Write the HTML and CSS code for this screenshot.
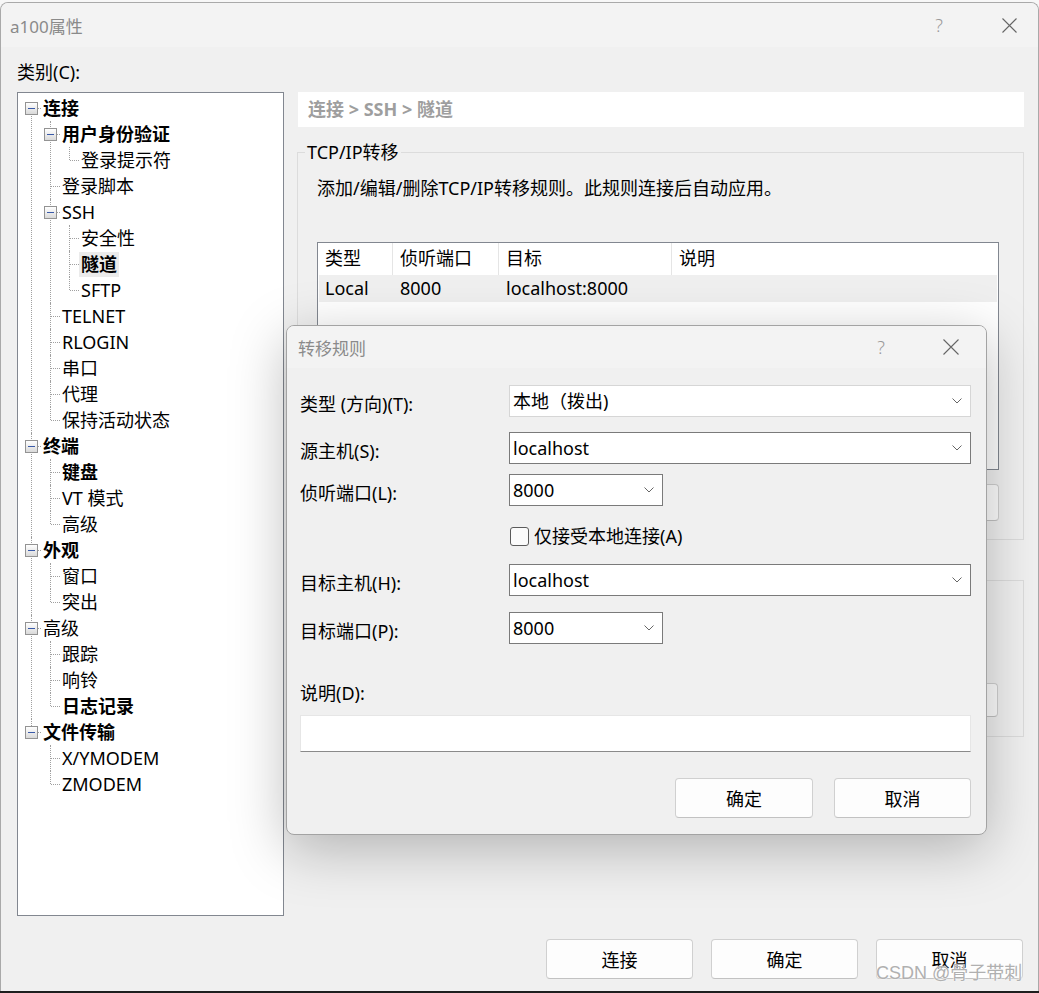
FILE: index.html
```html
<!DOCTYPE html>
<html lang="zh-CN">
<head>
<meta charset="utf-8">
<title>a100属性</title>
<link rel="stylesheet" href="styles.css">
</head>
<body>
<div class="window">
  <div class="titlebar">
    <span class="title">a100属性</span>
    <span class="tb-btns">
      <span class="tb-slot tb-help">?</span>
      <span class="tb-slot"><svg class="xicon" width="15" height="15" viewBox="0 0 15 15"><path d="M0.5 0.5 L14.5 14.5 M14.5 0.5 L0.5 14.5" stroke="#666" stroke-width="1.1" fill="none"/></svg></span>
    </span>
  </div>
  <div class="body">
    <div class="main">
      <div class="left">
        <div class="cat-label">类别(C):</div>
        <div class="tree">
          <ul class="tl t0">
            <li><div class="row"><span class="tg"></span><span class="lb b">连接</span></div>
              <ul class="tl">
                <li><div class="row"><span class="tg"></span><span class="lb b">用户身份验证</span></div>
                  <ul class="tl">
                    <li><div class="row"><span class="lb">登录提示符</span></div></li>
                  </ul>
                </li>
                <li><div class="row"><span class="lb">登录脚本</span></div></li>
                <li><div class="row"><span class="tg"></span><span class="lb">SSH</span></div>
                  <ul class="tl">
                    <li><div class="row"><span class="lb">安全性</span></div></li>
                    <li><div class="row"><span class="lb b sel">隧道</span></div></li>
                    <li><div class="row"><span class="lb">SFTP</span></div></li>
                  </ul>
                </li>
                <li><div class="row"><span class="lb">TELNET</span></div></li>
                <li><div class="row"><span class="lb">RLOGIN</span></div></li>
                <li><div class="row"><span class="lb">串口</span></div></li>
                <li><div class="row"><span class="lb">代理</span></div></li>
                <li><div class="row"><span class="lb">保持活动状态</span></div></li>
              </ul>
            </li>
            <li><div class="row"><span class="tg"></span><span class="lb b">终端</span></div>
              <ul class="tl">
                <li><div class="row"><span class="lb b">键盘</span></div></li>
                <li><div class="row"><span class="lb">VT 模式</span></div></li>
                <li><div class="row"><span class="lb">高级</span></div></li>
              </ul>
            </li>
            <li><div class="row"><span class="tg"></span><span class="lb b">外观</span></div>
              <ul class="tl">
                <li><div class="row"><span class="lb">窗口</span></div></li>
                <li><div class="row"><span class="lb">突出</span></div></li>
              </ul>
            </li>
            <li><div class="row"><span class="tg"></span><span class="lb">高级</span></div>
              <ul class="tl">
                <li><div class="row"><span class="lb">跟踪</span></div></li>
                <li><div class="row"><span class="lb">响铃</span></div></li>
                <li><div class="row"><span class="lb b">日志记录</span></div></li>
              </ul>
            </li>
            <li><div class="row"><span class="tg"></span><span class="lb b">文件传输</span></div>
              <ul class="tl">
                <li><div class="row"><span class="lb">X/YMODEM</span></div></li>
                <li><div class="row"><span class="lb">ZMODEM</span></div></li>
              </ul>
            </li>
          </ul>
        </div>
      </div>
      <div class="right">
        <div class="crumb">连接 &gt; SSH &gt; 隧道</div>
        <fieldset class="group g1">
          <legend>TCP/IP转移</legend>
          <p class="desc">添加/编辑/删除TCP/IP转移规则。此规则连接后自动应用。</p>
          <div class="list">
            <div class="lhead">
              <span class="c c1">类型</span><span class="c c2">侦听端口</span><span class="c c3">目标</span><span class="c c4">说明</span>
            </div>
            <div class="lrow">
              <span class="c c1">Local</span><span class="c c2">8000</span><span class="c c3">localhost:8000</span><span class="c c4"></span>
            </div>
          </div>
          <div class="gbtns">
            <button class="btn gbtn" aria-label="添加"></button>
            <button class="btn gbtn" aria-label="编辑"></button>
            <button class="btn gbtn" aria-label="删除"></button>
          </div>
        </fieldset>
        <div class="group g2">
          <div class="gbtns g2btns">
            <button class="btn gbtn" aria-label="浏览"></button>
          </div>
        </div>
      </div>
    </div>
    <div class="footer">
      <button class="btn fbtn">连接</button>
      <button class="btn fbtn">确定</button>
      <button class="btn fbtn">取消</button>
    </div>
  </div>
</div>
<div class="taskbar"></div>

<div class="dialog">
  <div class="dlg-title">
    <span class="dlg-name">转移规则</span>
    <span class="tb-btns dlg-btns">
      <span class="tb-slot tb-help">?</span>
      <span class="tb-slot"><svg class="xicon" width="16" height="16" viewBox="0 0 16 16"><path d="M0.5 0.5 L15.5 15.5 M15.5 0.5 L0.5 15.5" stroke="#666" stroke-width="1.1" fill="none"/></svg></span>
    </span>
  </div>
  <div class="dlg-body">
    <div class="frow r1">
      <span class="flabel">类型 (方向)(T):</span>
      <span class="combo wide light"><span class="cval">本地（拨出)</span><svg class="chev" width="10" height="6" viewBox="0 0 10 6"><path d="M0.5 0.5 L5 5 L9.5 0.5" stroke="#666" fill="none"/></svg></span>
    </div>
    <div class="frow r2">
      <span class="flabel">源主机(S):</span>
      <span class="combo wide"><span class="cval">localhost</span><svg class="chev" width="10" height="6" viewBox="0 0 10 6"><path d="M0.5 0.5 L5 5 L9.5 0.5" stroke="#666" fill="none"/></svg></span>
    </div>
    <div class="frow r3">
      <span class="flabel">侦听端口(L):</span>
      <span class="combo short"><span class="cval">8000</span><svg class="chev" width="10" height="6" viewBox="0 0 10 6"><path d="M0.5 0.5 L5 5 L9.5 0.5" stroke="#666" fill="none"/></svg></span>
    </div>
    <div class="crow">
      <span class="cbox"></span><span class="clabel">仅接受本地连接(A)</span>
    </div>
    <div class="frow r4">
      <span class="flabel">目标主机(H):</span>
      <span class="combo wide"><span class="cval">localhost</span><svg class="chev" width="10" height="6" viewBox="0 0 10 6"><path d="M0.5 0.5 L5 5 L9.5 0.5" stroke="#666" fill="none"/></svg></span>
    </div>
    <div class="frow r5">
      <span class="flabel">目标端口(P):</span>
      <span class="combo short"><span class="cval">8000</span><svg class="chev" width="10" height="6" viewBox="0 0 10 6"><path d="M0.5 0.5 L5 5 L9.5 0.5" stroke="#666" fill="none"/></svg></span>
    </div>
    <div class="dlabel">说明(D):</div>
    <div class="textbox"></div>
    <div class="dlg-actions">
      <button class="btn dbtn ok">确定</button>
      <button class="btn dbtn cancel">取消</button>
    </div>
  </div>
</div>

<div class="watermark">CSDN @骨子带刺</div>
</body>
</html>
```

FILE: styles.css
```css
* { box-sizing: border-box; }
html, body { margin: 0; padding: 0; }
body {
  width: 1039px;
  height: 993px;
  overflow: hidden;
  position: relative;
  background: #f7f7f7;
  font-family: "Noto Sans", "Noto Sans CJK SC", sans-serif;
  font-size: 18px;
  color: #000;
}

/* main window */
.window {
  margin-top: 2px;
  height: 989px;
  border: 1px solid #a9a9a9;
  border-bottom: 0;
  border-radius: 8px 8px 0 0;
  background: #f0f0f0;
  display: flex;
  flex-direction: column;
  overflow: hidden;
}
.titlebar {
  height: 44px;
  flex: none;
  background: #f3f3f3;
  display: flex;
  align-items: center;
  justify-content: space-between;
  padding-left: 9px;
}
.title { font-size: 17px; color: #8a8a8a; }
.tb-btns { display: flex; gap: 24px; margin-right: 6px; align-items: center; }
.tb-slot { width: 46px; display: flex; justify-content: center; align-items: center; }
.tb-help { color: #9a9a9a; font-size: 18px; font-weight: 300; }
.xicon { display: block; }

.body {
  flex: 1;
  display: flex;
  flex-direction: column;
  padding: 0 14px 0 16px;
}
.main { display: flex; gap: 14px; }
.left { width: 267px; flex: none; }
.cat-label { height: 45px; padding-top: 13px; line-height: 24px; }

/* tree */
.tree {
  height: 824px;
  border: 1px solid #828790;
  background: #fff;
  padding-top: 2px;
}
.tl { list-style: none; margin: 0; padding: 0; }
.tl .tl { margin-left: 19px; }
.tl li { position: relative; }
.tl li::before {
  content: "";
  position: absolute;
  left: 13px;
  top: 0;
  bottom: 0;
  border-left: 1px dotted #a0a0a0;
}
.tl li:last-child::before { bottom: auto; height: 13px; }
.t0 > li:first-child::before { top: 13px; }
.row {
  position: relative;
  height: 26px;
  display: flex;
  align-items: center;
  padding-left: 25px;
}
.row::before {
  content: "";
  position: absolute;
  left: 14px;
  top: 13px;
  width: 9px;
  border-top: 1px dotted #a0a0a0;
}
.tg {
  position: absolute;
  left: 7px;
  top: 7px;
  width: 13px;
  height: 13px;
  border: 1px solid #939393;
  background: linear-gradient(#ffffff, #d9d9d9);
  z-index: 1;
}
.tg::after {
  content: "";
  position: absolute;
  left: 2px;
  right: 2px;
  top: 5px;
  height: 1px;
  background: #3a5aa8;
}
.lb { line-height: 25px; white-space: nowrap; }
.lb.b { font-weight: bold; }
.lb.sel { background: #ebebeb; padding: 0 2px; margin-left: -2px; }

/* right panel */
.right { width: 726px; flex: none; padding-top: 45px; }
.crumb {
  height: 35px;
  line-height: 35px;
  background: #fff;
  padding-left: 10px;
  font-weight: bold;
  color: #9e9e9e;
}
.group {
  margin: 13px 0 0 -1px;
  width: 727px;
  min-width: 0;
  border: 1px solid #dcdcdc;
  padding: 12px 24px 18px 19px;
}
.group legend {
  padding: 0 2px;
  margin-left: -12px;
  line-height: 24px;
}
.desc { margin: 0; line-height: 24px; }
.list {
  margin-top: 42px;
  height: 228px;
  border: 1px solid #828790;
  background: #fff;
  padding: 0 1px;
}
.lhead, .lrow { display: flex; }
.lhead { height: 32px; line-height: 31px; }
.lrow { height: 27px; line-height: 27px; background: #efefef; }
.c { white-space: nowrap; padding-left: 7px; border-left: 1px solid transparent; }
.c1 { width: 73px; padding-left: 6px; border-left: 0; }
.c2 { width: 106px; }
.c3 { width: 173px; }
.c4 { flex: 1; }
.lhead .c2, .lhead .c3, .lhead .c4 { border-left-color: #e5e5e5; }
.gbtns { margin-top: 14px; display: flex; justify-content: flex-end; gap: 10px; }
.gbtn { width: 120px; height: 37px; }
.g2 { margin-top: 40px; padding: 0 25px 19px 19px; }
.g2btns { margin-top: 102px; }
.g2btns .gbtn { height: 34px; }

.btn {
  font: inherit;
  color: #000;
  background: #fdfdfd;
  border: 1px solid #d0d0d0;
  border-bottom-color: #c2c2c2;
  border-radius: 4px;
  padding: 0;
}
.footer {
  margin-top: 23px;
  display: flex;
  justify-content: flex-end;
  gap: 18px;
  padding-right: 1px;
}
.fbtn { width: 147px; height: 40px; }
.taskbar { height: 2px; background: #1e1e1e; }

/* dialog */
.dialog {
  position: absolute;
  left: 286px;
  top: 325px;
  width: 701px;
  height: 510px;
  border: 1px solid #a3a3a3;
  border-radius: 8px;
  background: #f0f0f0;
  box-shadow: 0 14px 56px rgba(0, 0, 0, 0.26);
  overflow: hidden;
  display: flex;
  flex-direction: column;
}
.dlg-title {
  height: 42px;
  flex: none;
  background: #f3f3f3;
  display: flex;
  align-items: center;
  justify-content: space-between;
  padding-left: 11px;
}
.dlg-name { font-size: 17px; color: #8a8a8a; }
.dlg-btns { margin-right: 12px; }
.dlg-body { padding: 17px 14px 16px 13px; display: flex; flex-direction: column; }
.frow { display: flex; align-items: center; height: 32px; }
.flabel { width: 209px; flex: none; padding-top: 3px; white-space: nowrap; }
.r2 { margin-top: 15px; }
.r3 { margin-top: 10px; }
.r4 { margin-top: 18px; }
.r5 { margin-top: 16px; }
.combo {
  height: 32px;
  background: #fff;
  border: 1px solid #7a7a7a;
  display: flex;
  align-items: center;
  justify-content: space-between;
  padding: 0 8px 0 3px;
}
.combo.light { border-color: #d6d6d6; }
.combo.wide { width: 462px; }
.combo.short { width: 154px; }
.cval { white-space: nowrap; line-height: 30px; }
.chev { display: block; }
.crow { margin-top: 20px; margin-left: 210px; height: 20px; display: flex; align-items: center; }
.cbox {
  width: 19px;
  height: 19px;
  border: 1px solid #5b5b5b;
  border-radius: 3px;
  background: #fbfbfb;
  flex: none;
}
.clabel { margin-left: 5px; line-height: 20px; white-space: nowrap; }
.dlabel { margin-top: 37px; height: 24px; line-height: 24px; }
.textbox {
  margin-top: 10px;
  height: 37px;
  width: 671px;
  background: #fff;
  border: 1px solid #e6e6e6;
  border-bottom-color: #8a8a8a;
}
.dlg-actions {
  margin-top: 26px;
  display: flex;
  justify-content: flex-end;
  gap: 21px;
  padding-right: 1px;
}
.dbtn { height: 40px; }
.dbtn.ok { width: 138px; }
.dbtn.cancel { width: 137px; }

.watermark {
  position: absolute;
  left: 876px;
  top: 961px;
  font-family: "Liberation Sans", "Noto Sans CJK SC", sans-serif;
  font-size: 18px;
  line-height: 24px;
  color: #b0b0b0;
  text-shadow: 0 0 2px #ffffff, 0 0 1px #ffffff;
  white-space: nowrap;
}
```
